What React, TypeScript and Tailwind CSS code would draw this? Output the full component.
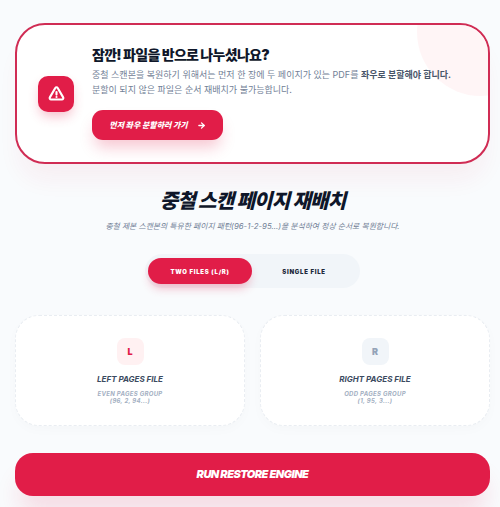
import React from 'react';
import { ArrowRight } from 'lucide-react';

const FONT = 'font-["Inter","Noto_Sans_CJK_KR",sans-serif]';

function UploadCard({ letter, title, group, pages, active }: { letter: string; title: string; group: string; pages: string; active?: boolean }) {
  return (
    <div className="flex h-[111px] flex-1 flex-col items-center rounded-[24px] border border-dashed border-[#e9edf2] bg-white pt-[22px] shadow-[0_4px_12px_rgba(15,23,42,0.02)]">
      <div className={`flex h-[27px] w-[27px] items-center justify-center rounded-[8px] text-[9px] font-black ${active ? 'bg-[#fff1f2] text-[#e11d48]' : 'bg-[#f1f5f9] text-[#94a3b8]'}`}>
        {letter}
      </div>
      <p className="mt-[8px] text-[8px] leading-[12px] font-bold text-[#3b4a60] italic">{title}</p>
      <p className="mt-[5px] text-center text-[6px] leading-[7px] font-bold tracking-[0.05em] text-[#a3afc2] italic">
        {group}
        <br />
        {pages}
      </p>
    </div>
  );
}

export default function App() {
  return (
    <div className={`h-[507px] w-[500px] overflow-hidden bg-[#f9fbfd] pt-[23px] pr-[10px] pl-[15px] ${FONT}`}>
      {/* Warning */}
      <div className="relative flex h-[141px] items-center overflow-hidden rounded-[30px] border-2 border-[#d02c54] bg-white pl-[21px] shadow-[0_20px_25px_-5px_rgba(225,29,72,0.06)]">
        <div className="absolute -top-[57px] -right-[57px] h-[128px] w-[128px] rounded-full bg-[#fff1f2] opacity-70" />
        <div className="relative flex h-[36px] w-[36px] shrink-0 items-center justify-center rounded-[10px] bg-[#e11d48] shadow-[0_6px_12px_-2px_rgba(225,29,72,0.3)]">
          <svg width="17" height="17" viewBox="0 0 24 24" fill="none" stroke="white" strokeWidth="3" strokeLinecap="round" strokeLinejoin="round">
            <path d="M10.3 4.2 2.6 17.5A2 2 0 0 0 4.3 20.5h15.4a2 2 0 0 0 1.7-3L13.7 4.2a2 2 0 0 0-3.4 0Z" />
            <path d="M12 10v3.5" />
            <path d="M12 17h.01" />
          </svg>
        </div>
        <div className="relative ml-[18px] pb-[2px]">
          <h2 className="text-[14px] leading-[20px] font-black tracking-[-0.05em] text-[#0f172a]">잠깐! 파일을 반으로 나누셨나요?</h2>
          <p className="mt-[2px] text-[9px] leading-[15px] font-normal whitespace-nowrap text-[#718096]">
            중철 스캔본을 복원하기 위해서는 먼저 한 장에 두 페이지가 있는 PDF를 <b className="font-bold text-[#475569]">좌우로 분할해야 합니다.</b>
            <br />
            분할이 되지 않은 파일은 순서 재배치가 불가능합니다.
          </p>
          <button className="mt-[13px] flex h-[30px] w-[131px] items-center justify-center gap-[9px] rounded-[11px] bg-[#e11d48] text-[8px] font-black text-white italic shadow-[0_10px_15px_-3px_rgba(225,29,72,0.25)]">
            먼저 좌우 분할하러 가기
            <ArrowRight size={9} strokeWidth={3.5} />
          </button>
        </div>
      </div>

      {/* Heading */}
      <h1 className="mt-[22px] text-center text-[20px] leading-[30px] font-black tracking-[-0.04em] text-[#0f172a] italic">중철 스캔 페이지 재배치</h1>
      <p className="mt-[4px] text-center text-[7.8px] leading-[12px] font-normal text-[#718096] italic">중철 제본 스캔본의 특유한 페이지 패턴(96-1-2-95...)을 분석하여 정상 순서로 복원합니다.</p>

      {/* Mode toggle */}
      <div className="mx-auto mt-[22px] flex h-[34px] w-[215px] items-center rounded-full bg-[#f1f5f9] pl-[3px]">
        <button className="h-[26px] w-[104px] rounded-full bg-[#e11d48] text-[6px] font-black tracking-[0.12em] text-white shadow-[0_6px_10px_-2px_rgba(225,29,72,0.3)]">TWO FILES (L/R)</button>
        <button className="h-[26px] w-[104px] text-[6px] font-black tracking-[0.12em] text-[#1e293b]">SINGLE FILE</button>
      </div>

      {/* Upload cards */}
      <div className="mt-[27px] flex gap-[15px]">
        <UploadCard letter="L" title="LEFT PAGES FILE" group="EVEN PAGES GROUP" pages="(96, 2, 94...)" active />
        <UploadCard letter="R" title="RIGHT PAGES FILE" group="ODD PAGES GROUP" pages="(1, 95, 3...)" />
      </div>

      <button className="mt-[27px] h-[43px] w-full rounded-[18px] bg-[#e11d48] text-[11px] font-black tracking-[-0.05em] text-white italic shadow-[0_20px_25px_-5px_rgba(225,29,72,0.15)]">RUN RESTORE ENGINE</button>
    </div>
  );
}
